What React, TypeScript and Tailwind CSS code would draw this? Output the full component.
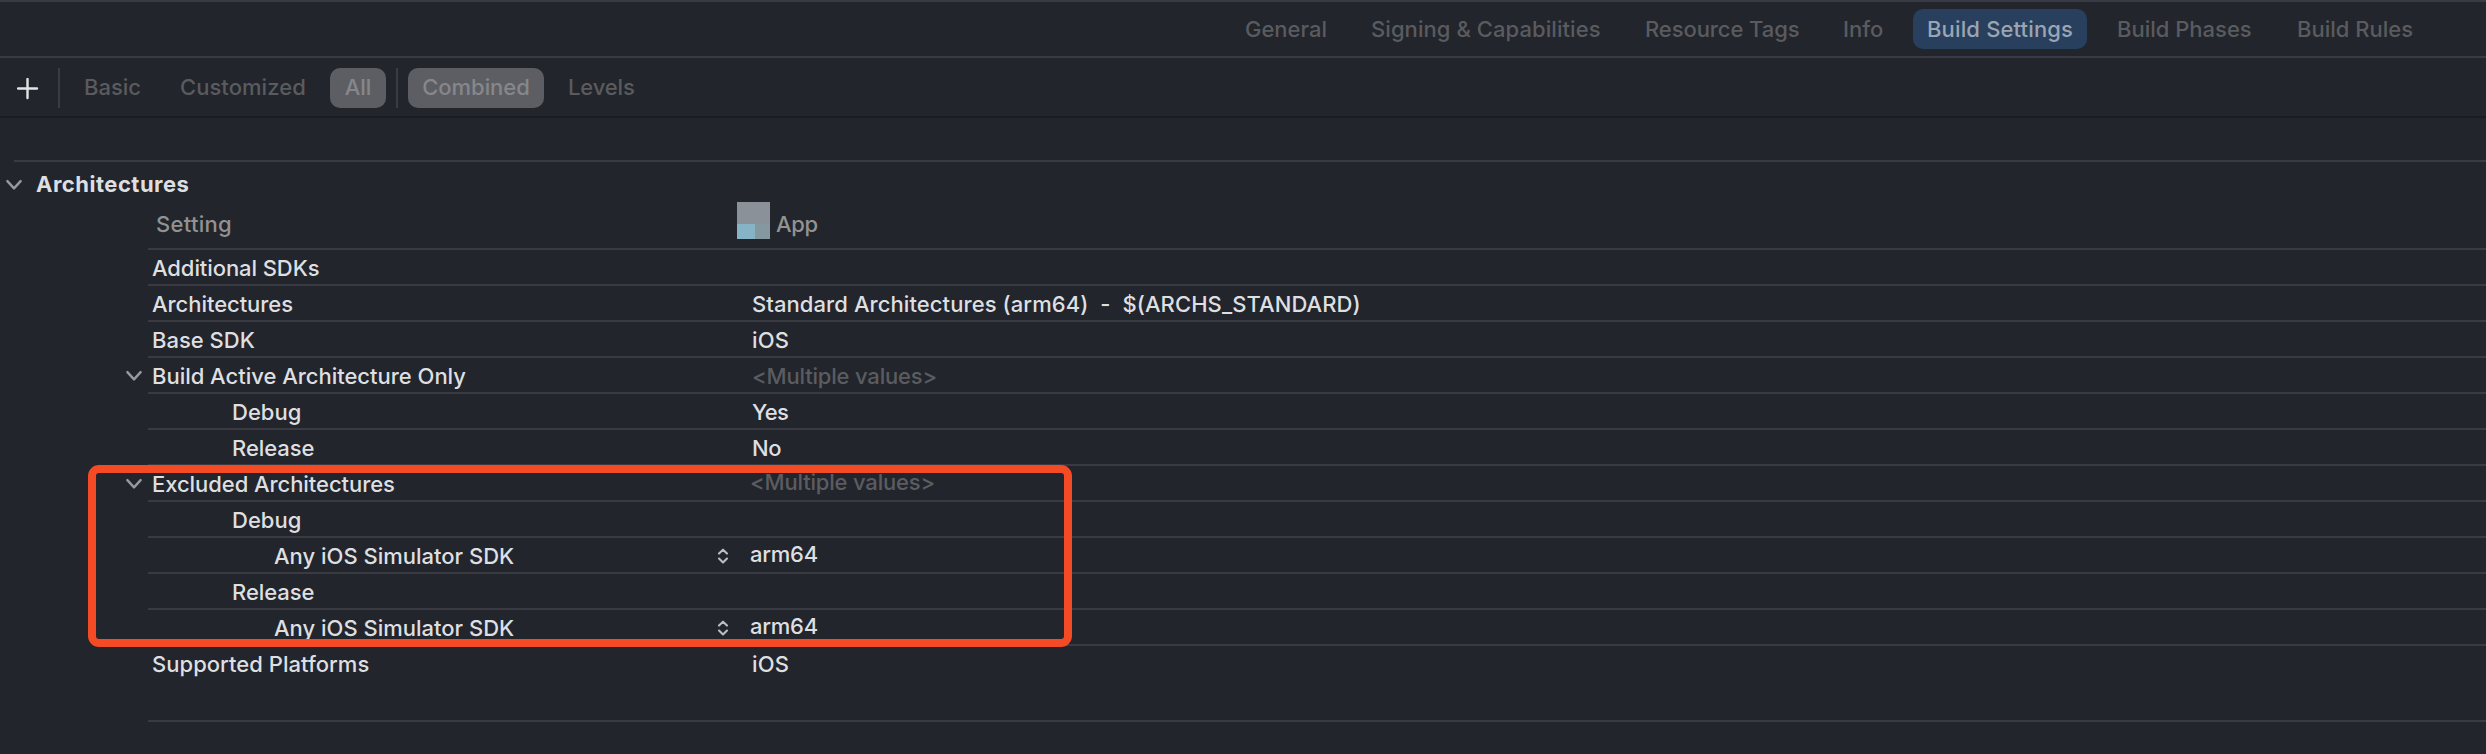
import clsx from "clsx";

type Tab = { label: string; cell: string; active?: boolean };

const tabs: Tab[] = [
  { label: "General", cell: "w-[126px] pl-3.5" },
  { label: "Signing & Capabilities", cell: "w-[274px] pl-3.5 tracking-[0.07px]" },
  { label: "Resource Tags", cell: "w-[198px] pl-3.5 tracking-[-0.08px]" },
  { label: "Info", cell: "w-[84px] pl-3.5" },
  { label: "Build Settings", cell: "mr-4 w-[174px] pl-3.5 tracking-[0.15px]", active: true },
  { label: "Build Phases", cell: "w-[180px] pl-3.5" },
  { label: "Build Rules", cell: "pl-3.5" },
];

type Setting = {
  label: string;
  value?: string;
  labelClass: string;
  valueClass?: string;
  open?: boolean;
  stepper?: boolean;
};

const settings: Setting[] = [
  { label: "Additional SDKs", labelClass: "pl-1 tracking-[-0.08px]" },
  {
    label: "Architectures",
    value: "Standard Architectures (arm64)  -  $(ARCHS_STANDARD)",
    labelClass: "pl-1 tracking-[-0.05px]",
    valueClass: "tracking-[0.08px]",
  },
  { label: "Base SDK", value: "iOS", labelClass: "pl-1", valueClass: "tracking-[0.2px]" },
  {
    label: "Build Active Architecture Only",
    value: "<Multiple values>",
    labelClass: "pl-1 tracking-[-0.02px]",
    valueClass: "tracking-[-0.18px] text-[#5b5c60]",
    open: true,
  },
  { label: "Debug", value: "Yes", labelClass: "pl-[84px]", valueClass: "tracking-[-0.6px]" },
  { label: "Release", value: "No", labelClass: "pl-[84px] tracking-[-0.05px]", valueClass: "tracking-[-0.5px]" },
  {
    label: "Excluded Architectures",
    value: "<Multiple values>",
    labelClass: "pl-1 tracking-[-0.06px]",
    valueClass: "-ml-0.5 pb-1 tracking-[-0.18px] text-[#5b5c60]",
    open: true,
  },
  { label: "Debug", labelClass: "pl-[84px]" },
  {
    label: "Any iOS Simulator SDK",
    value: "arm64",
    labelClass: "pl-[126px]",
    valueClass: "-ml-0.5 pb-1 tracking-[-0.25px]",
    stepper: true,
  },
  { label: "Release", labelClass: "pl-[84px] tracking-[-0.05px]" },
  {
    label: "Any iOS Simulator SDK",
    value: "arm64",
    labelClass: "pl-[126px]",
    valueClass: "-ml-0.5 pb-1 tracking-[-0.25px]",
    stepper: true,
  },
  {
    label: "Supported Platforms",
    value: "iOS",
    labelClass: "pl-1 tracking-[0.03px]",
    valueClass: "tracking-[0.2px]",
  },
];

function Chevron() {
  return (
    <svg width="16" height="12" viewBox="0 0 16 12" fill="none" className="shrink-0">
      <path d="M1.4 2.1 8 9.4l6.6-7.3" stroke="#98999c" strokeWidth="2.4" strokeLinecap="round" strokeLinejoin="round" />
    </svg>
  );
}

function Stepper() {
  return (
    <svg width="12" height="18" viewBox="0 0 12 18" fill="none" className="shrink-0">
      <path
        d="M2 6.6 6 2.7l4 3.9M2 11.6l4 3.9 4-3.9"
        stroke="#bcbdbf"
        strokeWidth="2.1"
        strokeLinecap="round"
        strokeLinejoin="round"
      />
    </svg>
  );
}

function SettingRow({ row }: { row: Setting }) {
  return (
    <div className="flex h-9">
      <div className="flex w-[148px] items-center justify-end pr-1.5 pt-1">{row.open && <Chevron />}</div>
      <div className="flex flex-1 items-stretch border-t-2 border-[#393a42] pt-0.5">
        <div className={clsx("flex w-[569px] items-center", row.labelClass)}>{row.label}</div>
        <div className="flex w-[35px] items-center">{row.stepper && <Stepper />}</div>
        <div className={clsx("flex items-center whitespace-pre", row.valueClass)}>{row.value}</div>
      </div>
    </div>
  );
}

export default function App() {
  return (
    <div className="relative flex h-[754px] w-[2486px] flex-col overflow-hidden bg-[#22252c] font-['Inter',sans-serif] text-[22px] leading-[30px] font-[450] whitespace-nowrap text-[#dedfe0]">
      <nav className="flex h-[58px] items-center border-y-2 border-[#383a44] pl-[1231px] text-[#5a5b5f]">
        {tabs.map((tab) => (
          <div
            key={tab.label}
            className={clsx(
              "flex h-10 shrink-0 items-center",
              tab.cell,
              tab.active && "rounded-[10px] bg-[#283f5d] text-[#9aa5b3]",
            )}
          >
            {tab.label}
          </div>
        ))}
      </nav>

      <div className="flex h-[60px] items-center border-b-2 border-[#1b1c20] pt-0.5 text-[#5a5b5f]">
        <svg width="22" height="22" viewBox="0 0 22 22" className="ml-[17px] mt-px" fill="none">
          <path d="M10.5 1v19M1 10.5h19" stroke="#e3e4e5" strokeWidth="2.4" strokeLinecap="round" />
        </svg>
        <div className="ml-[19px] h-10 w-0.5 bg-[#393a42]" />
        <div className="ml-6 w-[96px] pb-0.5">Basic</div>
        <div className="w-[150px] pb-0.5 tracking-[0.05px]">Customized</div>
        <div className="flex h-10 w-14 items-center justify-center rounded-[10px] bg-[#5d5e63] pb-0.5 text-[#86878b]">
          All
        </div>
        <div className="ml-2.5 h-10 w-0.5 bg-[#393a42]" />
        <div className="ml-2.5 flex h-10 w-[136px] items-center justify-center rounded-[10px] bg-[#5d5e63] pb-0.5 tracking-[-0.05px] text-[#86878b]">
          Combined
        </div>
        <div className="ml-6 pb-0.5 tracking-[-0.15px]">Levels</div>
      </div>

      <div className="ml-3.5 mt-[42px] h-0.5 shrink-0 bg-[#383a44]" />

      <div className="flex h-11 items-center gap-3.5 pl-1.5 font-bold">
        <div className="pt-0.5">
          <Chevron />
        </div>
        <div className="tracking-[0.5px]">Architectures</div>
      </div>

      <div className="flex h-[42px] text-[#929292]">
        <div className="w-[581px] pl-[156px] pt-[3px] tracking-[0.3px]">Setting</div>
        <div className="ml-[156px] grid h-[37px] w-[33px] -translate-y-1 grid-cols-[18px_15px] grid-rows-[22px_15px]">
          <div className="col-span-2 bg-[#8a9199]" />
          <div className="bg-[#86b3c5]" />
          <div className="bg-[#86989f]" />
        </div>
        <div className="pl-1.5 pt-[3px] tracking-[-0.3px]">App</div>
      </div>

      {settings.map((row, index) => (
        <SettingRow key={index} row={row} />
      ))}

      <div className="ml-[148px] mt-10 h-0.5 shrink-0 bg-[#393a42]" />

      <div className="absolute left-[88px] top-[465px] h-[182px] w-[984px] rounded-[11px] border-8 border-[#f54b25]" />
    </div>
  );
}
